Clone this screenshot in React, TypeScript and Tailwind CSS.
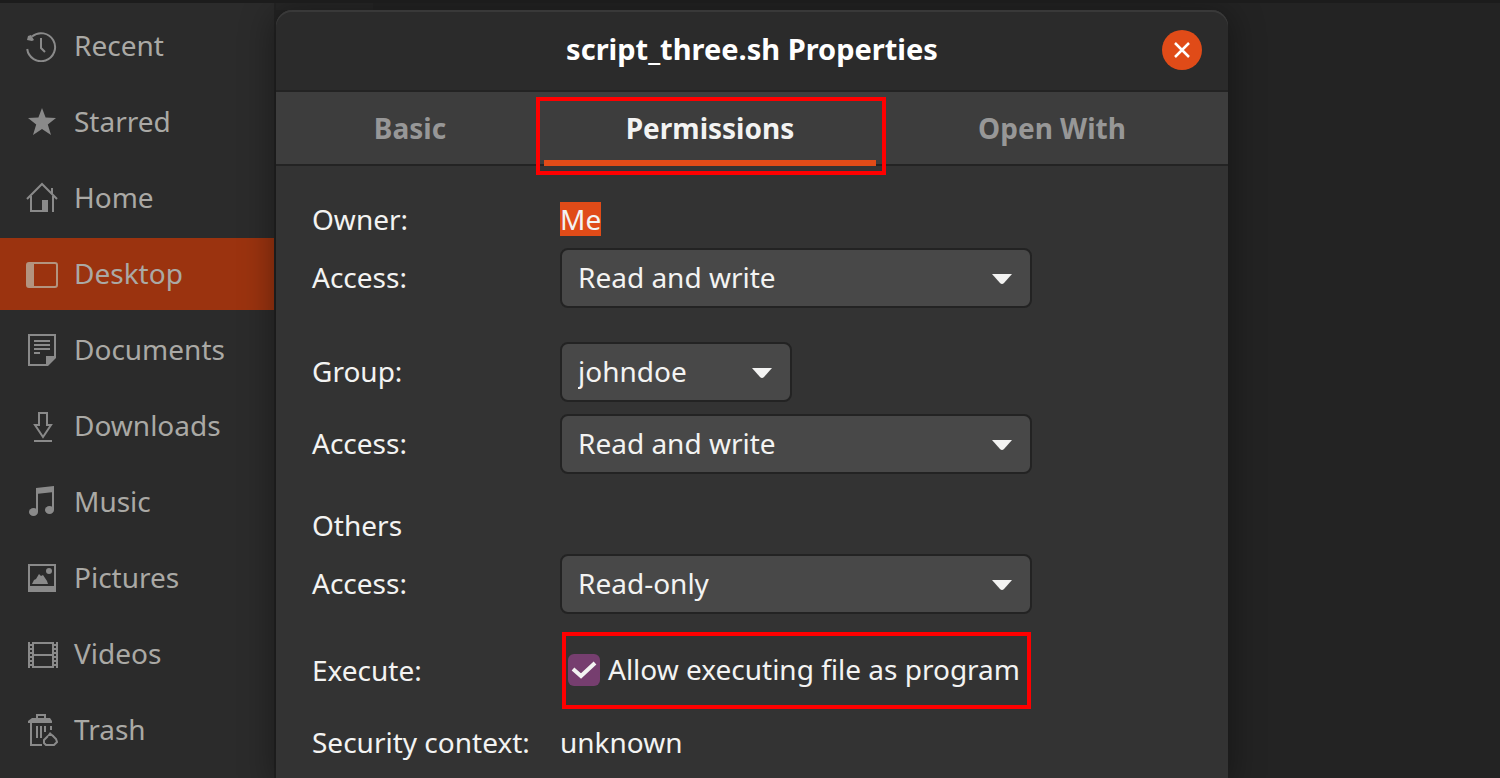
import { useState, type ReactNode } from 'react'

const PLACES: { name: string; icon: ReactNode }[] = [
  {
    name: 'Recent',
    icon: (
      <>
        <path d="M6 6.500A14 14 0 1 1 1.200 19" fill="none" stroke="currentColor" strokeWidth="2" />
        <path d="M15 8v10l4 4" fill="none" stroke="currentColor" strokeWidth="2" />
        <path d="M1 10l1-4 3-1 3 5-2 1z" fill="currentColor" />
      </>
    ),
  },
  {
    name: 'Starred',
    icon: <path d="M16 2l3.600 9.600L30 12l-8.200 6.600L25 29l-9-6-9 6 3.200-10.400L2 12l10.400-.4z" fill="currentColor" />,
  },
  {
    name: 'Home',
    icon: (
      <>
        <path d="M1 17L16 2l15 15M5 14v15h12M27 14v16" fill="none" stroke="currentColor" strokeWidth="2" />
        <path d="M16 18h6v12h-6zM25 6h2v6h-2z" fill="currentColor" />
      </>
    ),
  },
  {
    name: 'Desktop',
    icon: (
      <>
        <rect x="1" y="5" width="30" height="24" rx="2" fill="none" stroke="currentColor" strokeWidth="2" />
        <path d="M2 5h6v24H2z" fill="currentColor" />
      </>
    ),
  },
  {
    name: 'Documents',
    icon: (
      <>
        <path d="M20 31H3V1h26v22" fill="none" stroke="currentColor" strokeWidth="2" />
        <path d="M8 7h16M8 11h16M8 15h16M8 19h6" fill="none" stroke="currentColor" strokeWidth="2" />
        <path d="M20 22h10v2l-8 8h-2z" fill="currentColor" />
      </>
    ),
  },
  {
    name: 'Downloads',
    icon: (
      <path d="M13 15V3h8v12h4l-8 12-8-12zM8 31h18" fill="none" stroke="currentColor" strokeWidth="2" />
    ),
  },
  {
    name: 'Music',
    icon: (
      <>
        <path d="M10 2l18-2v6l-18 2z" fill="currentColor" />
        <path d="M11 4v22M27 2v22" fill="none" stroke="currentColor" strokeWidth="2" />
        <ellipse cx="7.500" cy="26" rx="4.500" ry="4" fill="currentColor" />
        <ellipse cx="23.500" cy="24" rx="4.500" ry="4" fill="currentColor" />
      </>
    ),
  },
  {
    name: 'Pictures',
    icon: (
      <>
        <rect x="3" y="3" width="26" height="26" fill="none" stroke="currentColor" strokeWidth="2" />
        <path d="M2 24h28v6H2zM6 22l2-4 2-1 3-5 2 2 2-1 4 6 1 3z" fill="currentColor" />
        <circle cx="23" cy="9" r="3" fill="currentColor" />
      </>
    ),
  },
  {
    name: 'Videos',
    icon: (
      <>
        <path d="M3 4v26M31 4v26M7 4v26M27 4v26M6 5h22M6 29h22M6 17h22" fill="none" stroke="currentColor" strokeWidth="2" />
        <path d="M5 6v24M29 6v24" fill="none" stroke="currentColor" strokeWidth="2" strokeDasharray="2 2" />
      </>
    ),
  },
  {
    name: 'Trash',
    icon: (
      <>
        <path d="M11 5V1h8v4M5 9v22h11M11 12v12M15 12v12M19 12v6M25 12v4" fill="none" stroke="currentColor" strokeWidth="2" />
        <path d="M6 4h18l2 3v2H2V7z" fill="currentColor" />
        <path d="M22 22l-4 4v3l2 2h8l3-3-1-3-4-4" fill="none" stroke="currentColor" strokeWidth="2" />
        <path d="M24 18l4 4h-7z" fill="currentColor" />
      </>
    ),
  },
]

const TABS = ['Basic', 'Permissions', 'Open With']
const ACCESS = ['None', 'Read-only', 'Read and write']

function Select({ id, value, options, onChange, className }: {
  id: string
  value: string
  options: string[]
  onChange: (v: string) => void
  className: string
}) {
  return (
    <div className={`relative max-w-full ${className}`}>
      <select
        id={id}
        value={value}
        onChange={e => onChange(e.target.value)}
        className="block h-[60px] w-full appearance-none rounded-lg border-2 border-[#232323] bg-[#484848] pr-14 pb-[2px] pl-4 text-[28px] leading-10 text-[#f3f3f2] focus:outline-none"
      >
        {options.map(o => <option key={o}>{o}</option>)}
      </select>
      <svg viewBox="0 0 20 10" className="pointer-events-none absolute top-[26px] right-5 h-[10px] w-5 text-[#f3f3f2]">
        <path d="M0 0h20l-8 9q-2 2-4 0z" fill="currentColor" />
      </svg>
    </div>
  )
}

function Row({ label, htmlFor, className = '', children }: {
  label: string
  htmlFor?: string
  className?: string
  children?: ReactNode
}) {
  return (
    <div className={`flex items-center ${className}`}>
      {htmlFor
        ? <label htmlFor={htmlFor} className="w-[248px] shrink-0 pb-[2px]">{label}</label>
        : <span className="w-[248px] shrink-0">{label}</span>}
      {children}
    </div>
  )
}

export default function App() {
  const [place, setPlace] = useState('Desktop')
  const [tab, setTab] = useState('Permissions')
  const [owner, setOwner] = useState('Read and write')
  const [group, setGroup] = useState('johndoe')
  const [groupAccess, setGroupAccess] = useState('Read and write')
  const [others, setOthers] = useState('Read-only')
  const [exec, setExec] = useState(true)

  return (
    <div className="flex h-screen overflow-hidden border-t-3 border-[#1c1c1c] bg-[#232323] font-['Noto_Sans',sans-serif] text-[28px] leading-[34px] text-[#f3f3f2]">

      {/* Places sidebar */}
      <nav className="flex w-[276px] shrink-0 flex-col gap-1 border-r-2 border-[#232323] bg-[#2b2b2b] pt-[7px]">
        {PLACES.map(p => (
          <button
            key={p.name}
            onClick={() => setPlace(p.name)}
            className={`flex h-[72px] shrink-0 items-center gap-4 pl-[26px] text-left ${place === p.name ? 'bg-[#9b330f]' : ''}`}
          >
            <svg viewBox="0 0 32 32" className={`size-8 shrink-0 ${place === p.name ? 'text-[#b3947f]' : 'text-[#8a8a8a]'}`}>
              {p.icon}
            </svg>
            <span className="pb-[2px] text-[#aaa9a5]">{p.name}</span>
          </button>
        ))}
      </nav>

      {/* Properties dialog */}
      <div className="flex min-w-0 flex-[952] flex-col">
        <div className="h-[7px] w-[97px] shrink-0 bg-[#262626]" />
        <section className="relative flex flex-1 flex-col rounded-t-2xl bg-[#333333] shadow-[0_4px_32px_4px_rgba(0,0,0,0.35)]">
          <header className="relative flex h-[82px] shrink-0 items-center justify-center rounded-t-2xl border-b-2 border-[#232323] bg-[#2b2b2b] shadow-[inset_0_2px_0_#393939]">
            <h1 className="pb-[2px] text-[29px] font-bold text-white">script_three.sh Properties</h1>
            <button aria-label="Close" className="absolute right-[26px] flex size-10 items-center justify-center rounded-full bg-[#e04b18]">
              <svg viewBox="0 0 16 16" className="size-4">
                <path d="M1 1l14 14M15 1L1 15" stroke="white" strokeWidth="2.500" />
              </svg>
            </button>
          </header>

          <div role="tablist" className="grid h-[74px] shrink-0 grid-cols-[67fr_83fr_88fr] border-b-2 border-[#232323] bg-[#3d3d3d]">
            {TABS.map(t => (
              <button
                key={t}
                role="tab"
                aria-selected={tab === t}
                onClick={() => setTab(t)}
                className={`relative font-bold ${tab === t ? 'text-[#f3f3f2]' : 'text-[#979797]'}`}
              >
                {t}
                {tab === t && <span className="absolute inset-x-0 -bottom-[2px] h-[6px] bg-[#e04b18]" />}
                {t === 'Permissions' && (
                  <span className="pointer-events-none absolute top-[5px] -right-[10px] -bottom-[11px] -left-2 border-4 border-[#ff0000]" />
                )}
              </button>
            ))}
          </div>

          <div className="flex flex-col px-9 pt-9">
            <Row label="Owner:"><span className="bg-[#e04b18]">Me</span></Row>
            <Row label="Access:" htmlFor="owner-access" className="mt-3">
              <Select id="owner-access" value={owner} options={ACCESS} onChange={setOwner} className="w-[472px]" />
            </Row>

            <Row label="Group:" htmlFor="group" className="mt-[34px]">
              <Select id="group" value={group} options={['johndoe', 'adm', 'sudo']} onChange={setGroup} className="w-[232px]" />
            </Row>
            <Row label="Access:" htmlFor="group-access" className="mt-3">
              <Select id="group-access" value={groupAccess} options={ACCESS} onChange={setGroupAccess} className="w-[472px]" />
            </Row>

            <Row label="Others" className="mt-[34px]" />
            <Row label="Access:" htmlFor="others-access" className="mt-3">
              <Select id="others-access" value={others} options={ACCESS} onChange={setOthers} className="w-[472px]" />
            </Row>

            <Row label="Execute:" htmlFor="execute" className="mt-[18px]">
              <div className="ml-[2px] flex h-[77px] w-[469px] items-center gap-2 border-4 border-[#ff0000] pb-[2px] pl-[2px] whitespace-nowrap">
                <span className="relative size-8 shrink-0">
                  <input
                    id="execute"
                    type="checkbox"
                    checked={exec}
                    onChange={e => setExec(e.target.checked)}
                    className="block size-8 appearance-none rounded-md bg-[#484848] checked:bg-[#763e6f]"
                  />
                  {exec && (
                    <svg viewBox="0 0 32 32" className="pointer-events-none absolute inset-0">
                      <path d="M5 15l8 7L27 9" fill="none" stroke="#f3f3f2" strokeWidth="4" />
                    </svg>
                  )}
                </span>
                <label htmlFor="execute" className="pb-[2px]">Allow executing file as program</label>
              </div>
            </Row>

            <Row label="Security context:" className="mt-4"><span>unknown</span></Row>
          </div>
        </section>
      </div>

      <div className="flex-[272]" />
    </div>
  )
}
